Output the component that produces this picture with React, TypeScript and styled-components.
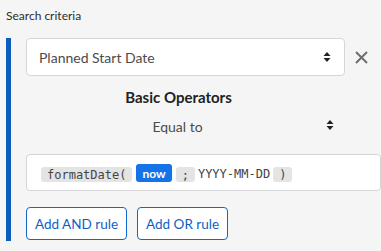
import styled, { createGlobalStyle } from 'styled-components'

const GlobalStyle = createGlobalStyle`
  body {
    margin: 0;
    background-color: #f5f5f5;
    font-family: Lato, "Noto Sans", sans-serif;
    color: #2c2c2c;
  }
`

const Page = styled.div`
  padding: 8px 0 0 6px;
  width: 375px;
  height: 243px;
`

const Title = styled.div`
  font-size: 12px;
  line-height: 16px;
  color: #2c2c2c;
  margin-bottom: 14px;
`

const Group = styled.div`
  display: flex;
  flex-direction: column;
  border-left: 5px solid #0b5cbd;
  padding: 0 0 1px 15px;
`

const Row = styled.div`
  display: flex;
  align-items: center;
  gap: 10px;
`

const Select = styled.div`
  box-sizing: border-box;
  display: flex;
  align-items: center;
  justify-content: space-between;
  width: 319px;
  height: 38px;
  padding: 0 13px 0 12px;
  background-color: #fff;
  border: 1px solid #d6d6d6;
  border-radius: 4px;
  font-size: 14px;
  color: #4b4b4b;
`

const CloseButton = styled.button`
  display: flex;
  padding: 0;
  border: none;
  background: transparent;
  cursor: pointer;
`

const Operators = styled.div`
  display: flex;
  flex-direction: column;
  width: 319px;
  margin-top: 12px;
`

const Heading = styled.div`
  font-size: 15px;
  font-weight: 700;
  line-height: 18px;
  text-align: center;
  padding-right: 14px;
  color: #222;
`

const OperatorSelect = styled.div`
  box-sizing: border-box;
  position: relative;
  display: flex;
  align-items: center;
  justify-content: center;
  height: 36px;
  margin-top: 2px;
  padding-right: 16px;
  font-size: 14px;
  color: #4b4b4b;
  svg {
    position: absolute;
    right: 11px;
    top: 12px;
  }
`

const Expression = styled.div`
  box-sizing: border-box;
  display: flex;
  align-items: flex-end;
  height: 37px;
  margin-top: 10px;
  padding: 0 14px 8px 14px;
  background-color: #fff;
  border: 1px solid #d6d6d6;
  border-radius: 4px;
  font-family: "DejaVu Sans Mono", "Liberation Mono", monospace;
  font-size: 12px;
  color: #444;
`

const Chip = styled.span<{ $gap: number }>`
  display: inline-flex;
  align-items: center;
  height: 15px;
  padding: 0 6px;
  margin-right: ${(p) => p.$gap}px;
  background-color: #e4e4e4;
  border-radius: 3px;
`

const Variable = styled.span`
  display: inline-flex;
  align-items: center;
  height: 18px;
  padding: 0 6px;
  margin-right: 4px;
  background-color: #1473e6;
  border-radius: 3px;
  font-family: Lato, "Noto Sans", sans-serif;
  font-weight: 700;
  font-size: 12px;
  color: #fff;
`

const Plain = styled.span`
  line-height: 15px;
  margin-right: 3px;
`

const Actions = styled.div`
  display: flex;
  gap: 10px;
  margin-top: 16px;
`

const Button = styled.button`
  box-sizing: border-box;
  height: 33px;
  padding: 0 8px;
  background-color: #fff;
  border: 1px solid #1167d0;
  border-radius: 4px;
  font-family: Lato, "Noto Sans", sans-serif;
  font-size: 13.5px;
  color: #0d5fc6;
  cursor: pointer;
`

const Arrows = () => (
  <svg width="8" height="10" viewBox="0 0 8 10">
    <path d="M4 0 L7.5 4 L0.5 4 Z M0.5 6 L7.5 6 L4 10 Z" fill="#222" />
  </svg>
)

export default function App() {
  return (
    <Page>
      <GlobalStyle />
      <Title>Search criteria</Title>
      <Group>
        <Row>
          <Select>
            Planned Start Date
            <Arrows />
          </Select>
          <CloseButton>
            <svg width="13" height="13" viewBox="0 0 13 13">
              <path d="M1 1 L12 12 M12 1 L1 12" stroke="#6e6e6e" strokeWidth="2" />
            </svg>
          </CloseButton>
        </Row>
        <Operators>
          <Heading>Basic Operators</Heading>
          <OperatorSelect>
            Equal to
            <Arrows />
          </OperatorSelect>
        </Operators>
        <Expression>
          <Chip $gap={4}>formatDate(</Chip>
          <Variable>now</Variable>
          <Chip $gap={3}>;</Chip>
          <Plain>YYYY-MM-DD</Plain>
          <Chip $gap={0}>)</Chip>
        </Expression>
        <Actions>
          <Button>Add AND rule</Button>
          <Button>Add OR rule</Button>
        </Actions>
      </Group>
    </Page>
  )
}
